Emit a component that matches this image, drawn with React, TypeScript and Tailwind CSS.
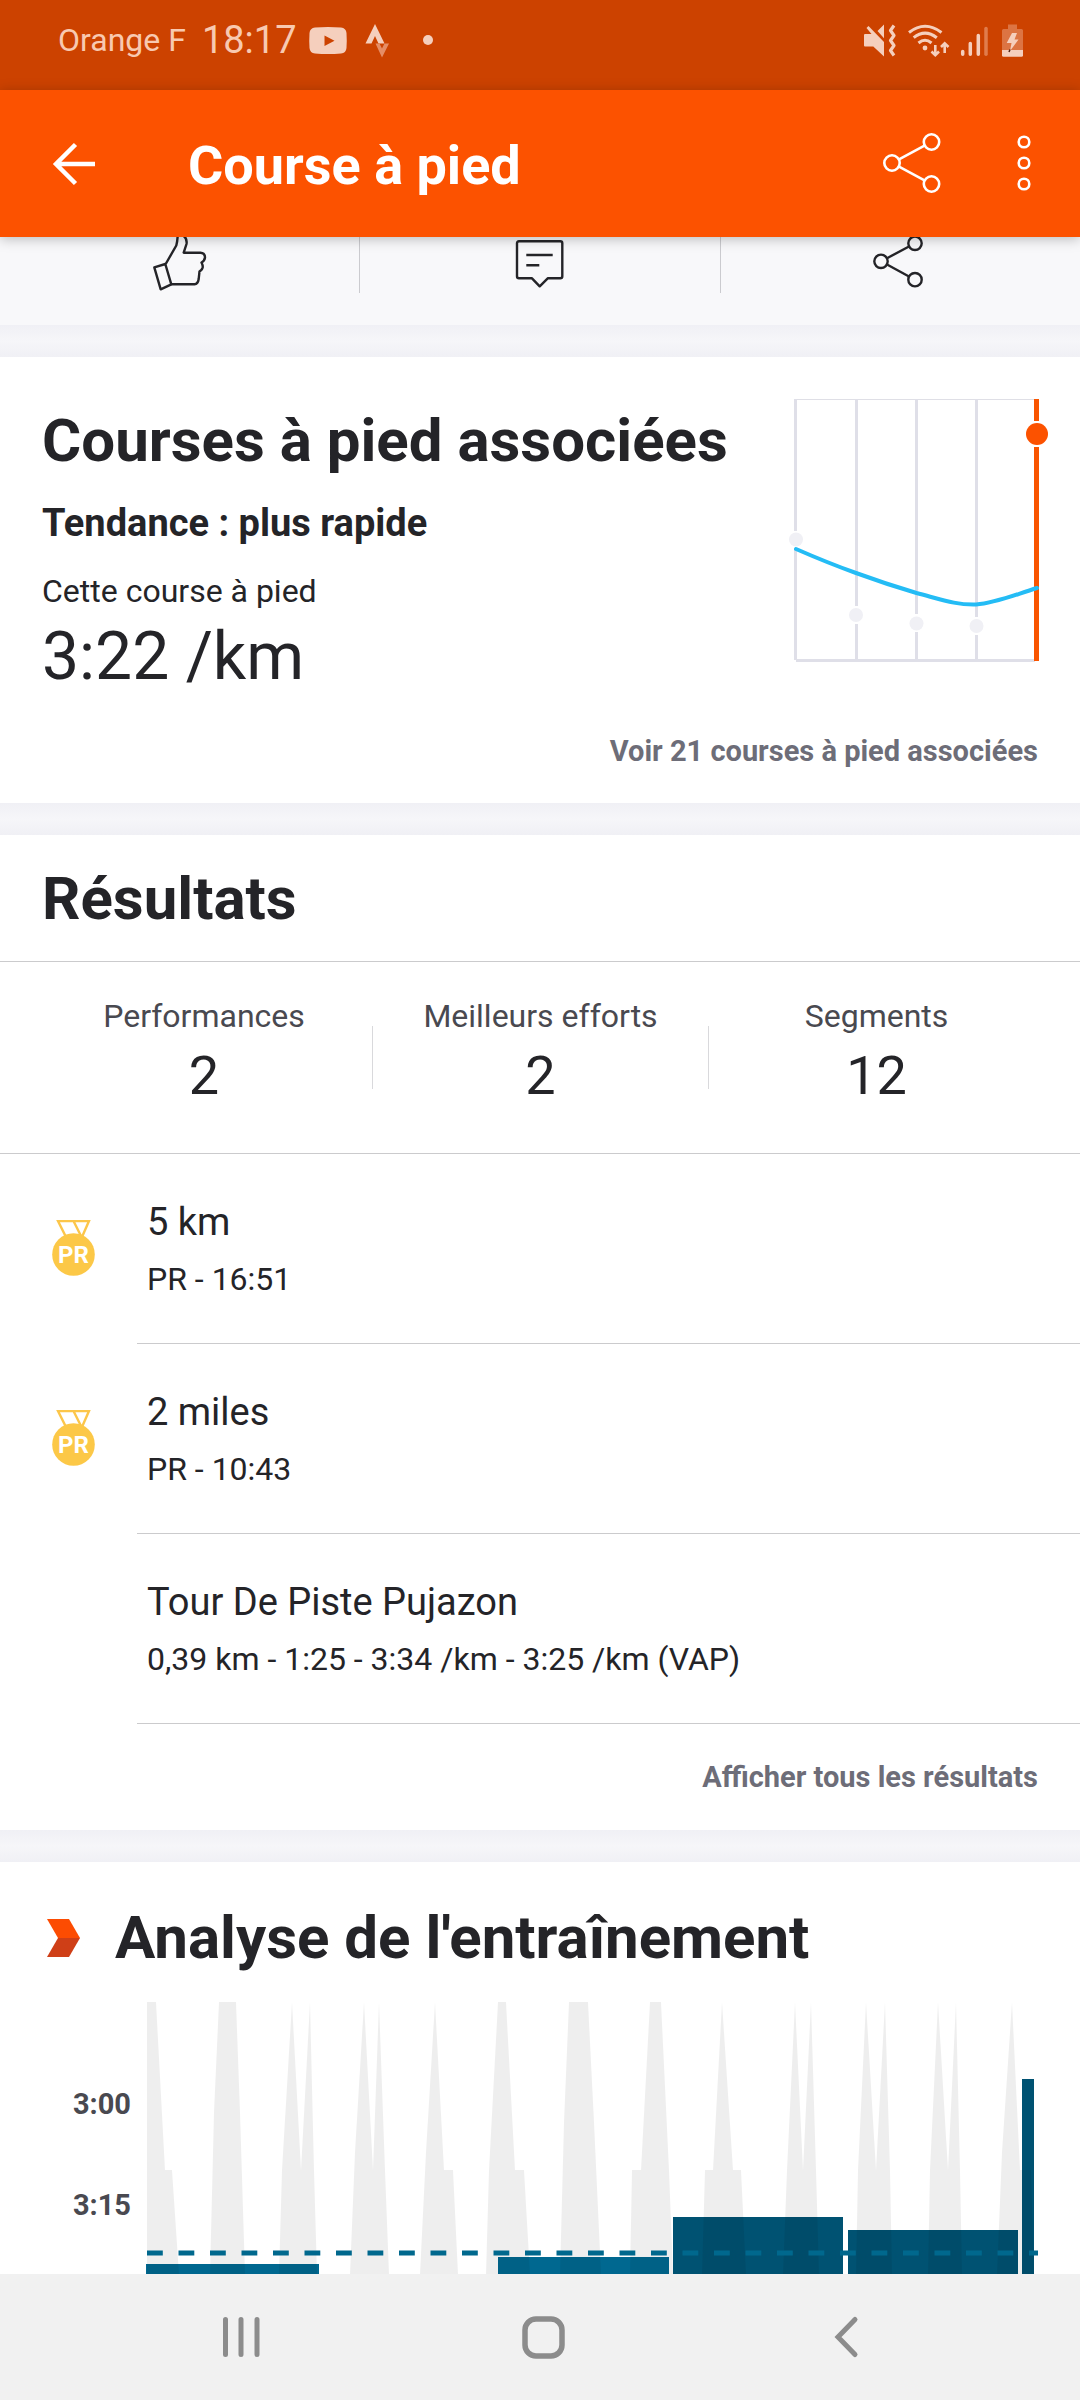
import type { ReactNode } from "react";

const efforts = [
  { title: "5 km", detail: "PR - 16:51", medal: true },
  { title: "2 miles", detail: "PR - 10:43", medal: true },
  {
    title: "Tour De Piste Pujazon",
    detail: "0,39 km - 1:25 - 3:34 /km - 3:25 /km (VAP)",
    medal: false,
  },
];

const stats = [
  { label: "Performances", value: "2" },
  { label: "Meilleurs efforts", value: "2" },
  { label: "Segments", value: "12" },
];

const laps = [
  { x: 0, width: 173, top: 262, color: "#006890" },
  { x: 352, width: 171, top: 255, color: "#006890" },
  { x: 527, width: 170, top: 215, color: "#005272" },
  { x: 702, width: 170, top: 228, color: "#005272" },
  { x: 876, width: 12, top: 77, color: "#005272" },
];

const elevation = [
  "1,0 10,0 19,168 26,168 33,272 1,272",
  "73,0 90,0 94,110 99,272 64,272 68,110",
  "133,272 136,168 146,0 155,168 164,0 168,168 171,272",
  "204,272 209,150 218,0 227,168 233,0 239,168 243,272",
  "274,272 280,150 289,0 298,168 307,168 312,272",
  "340,272 343,168 352,0 360,0 369,168 378,168 384,272",
  "414,272 418,120 423,0 442,0 448,120 455,272",
  "484,272 486,168 495,168 504,0 515,0 523,168 527,272",
  "556,272 559,168 567,168 576,0 587,168 595,168 600,272",
  "637,272 641,168 649,0 657,168 665,0 670,168 673,272",
  "710,272 712,168 720,0 730,168 739,0 744,168 746,272",
  "782,272 784,168 792,0 802,168 810,0 814,168 816,272",
  "851,272 856,150 866,0 874,168 885,168 888,272",
];

function StatusBar() {
  return (
    <div className="flex h-[90px] items-start justify-between bg-[#cc4200] pl-[58px] pr-14 pt-[22px] text-[#f8c9b0]">
      <div className="flex h-9 items-center">
        <span className="text-[32px] leading-10">Orange F</span>
        <span className="ml-4 text-[38px] leading-10">18:17</span>
        <svg className="ml-3 h-9 w-[38px]" viewBox="0 0 38 36" fill="#f5cfbd">
          <path
            fillRule="evenodd"
            d="M6 5.500Q19 4.500 32 5.500Q37 6 37.500 11Q38 18.500 37.500 26Q37 31 32 31.500Q19 32.500 6 31.500Q1 31 .5 26Q0 18.500 .5 11Q1 6 6 5.500ZM15.500 13.500V24L25.500 18.800Z"
          />
        </svg>
        <svg className="ml-4 h-9 w-7" viewBox="0 0 28 36">
          <path d="M12 2L2.500 21.500H8.500L12 14L15.500 21.500H21.500Z" fill="#f5cfbd" />
          <path d="M12.500 21.500H16.500L19 26.500L21.500 21.500H26L19 35.500Z" fill="#e58d66" />
        </svg>
        <span className="ml-8 size-2.5 rounded-full bg-[#f5cfbd]" />
      </div>
      <div className="flex gap-2">
        <svg className="h-9 w-9" viewBox="0 0 36 36">
          <path d="M2 13Q2 12 3 12H9.500L4.500 6L6.500 4L22 20V34.500L11.300 24.500H3Q2 24.500 2 23.500ZM22 2.500V16.300L15.500 9Z" fill="#f5cfbd" />
          <path d="M32 3.500L28.500 8.500L32 13.500L28.500 18.500L32 23.500L28.500 28.500L32 33.500" fill="none" stroke="#f5cfbd" strokeWidth="3.200" strokeLinejoin="round" />
        </svg>
        <svg className="h-9 w-11" viewBox="0 0 44 36" fill="none" stroke="#f5cfbd" strokeWidth="3">
          <path d="M3 10.500Q19 -2 35.500 10.500M7.700 15.700Q19 6.500 30.800 15.700M12.500 21Q19 15.500 25.500 21" />
          <circle cx="19" cy="26" r="2.400" fill="#f5cfbd" stroke="none" />
          <path d="M29.300 23V33M25.500 29.500L29.300 33.200L33 29.500M38.700 31V21.500M35 25L38.700 21.300L42.500 25" strokeWidth="2.600" />
        </svg>
        <svg className="h-9 w-8" viewBox="0 0 32 36" stroke="#f5cfbd" strokeWidth="3.500" strokeLinecap="round">
          <path d="M4.700 29.500V32.300M12.300 21.500V32.300M20.300 13.500V32.300" />
          <path d="M28 6.500V32.300" stroke="#e07c4c" />
        </svg>
        <svg className="h-9 w-[26px]" viewBox="-2 0 26 36">
          <path d="M8 2.500H17V7H21.500Q23 7 23 8.500V28H2V8.500Q2 7 3.500 7H8Z" fill="#dc7443" />
          <path d="M2 28H23V33.200Q23 34.700 21.500 34.700H3.500Q2 34.700 2 33.200Z" fill="#f5cfbd" />
          <path d="M12 11H17L14.500 17.500H18.500L10 29L11.500 21H6.700Z" fill="#f5cfbd" />
          <path d="M9 30L10 27.500" stroke="#4d2313" strokeWidth="1.500" />
        </svg>
      </div>
    </div>
  );
}

function Header() {
  return (
    <header className="relative z-10 flex h-[147px] items-center bg-[#fc5200] pl-[52px] pr-12 text-white shadow-[0_2px_12px_rgba(0,0,0,0.25)]">
      <button type="button" aria-label="Retour">
        <svg className="size-11" viewBox="0 0 44 44" fill="none" stroke="currentColor" strokeWidth="4.500">
          <path d="M43 22H4M23.500 2.500L4 22L23.500 41.500" />
        </svg>
      </button>
      <h1 className="ml-[92px] flex-1 pt-1 text-[54px] font-bold leading-[64px]">Course à pied</h1>
      <button type="button" aria-label="Partager">
        <svg className="size-[62px]" viewBox="0 0 62 62" fill="none" stroke="currentColor" strokeWidth="2.600">
          <circle cx="10" cy="30" r="7.700" />
          <circle cx="49.500" cy="9" r="7.700" />
          <circle cx="49.500" cy="51" r="7.700" />
          <path d="M17 26.300L42.500 12.700M17 33.700L42.500 47.300" />
        </svg>
      </button>
      <button type="button" aria-label="Plus d'options" className="ml-[72px]">
        <svg className="h-[62px] w-4" viewBox="0 0 16 62" fill="none" stroke="currentColor" strokeWidth="2.600">
          <circle cx="8" cy="9" r="5.300" />
          <circle cx="8" cy="30" r="5.300" />
          <circle cx="8" cy="51" r="5.300" />
        </svg>
      </button>
    </header>
  );
}

function ActionButton({ label, children }: { label: string; children: ReactNode }) {
  return (
    <button type="button" aria-label={label} className="flex flex-1 justify-center">
      <svg
        className="size-[60px]"
        viewBox="0 0 60 60"
        fill="none"
        stroke="#242428"
        strokeWidth="2.400"
        strokeLinejoin="round"
      >
        {children}
      </svg>
    </button>
  );
}

function ActionBar() {
  return (
    <div className="flex h-[88px] items-start bg-[#f8f8fa]">
      <ActionButton label="Kudos">
        <path d="M4.300 30.300L15.300 27L21.300 47.300L10.700 52.300Z" />
        <path d="M15.700 27L26.300 8.500Q27.500 4 27.700 -2H32Q37.500 .5 36.500 7L33.700 15.700H50.500Q55 16 55 20.500Q54.500 24 51.500 25.500Q53.500 29.500 52.300 31.500Q51.500 33.500 49.500 34.300L48.700 42Q48 47 44.500 47.300H21.300" />
      </ActionButton>
      <div className="h-14 w-px bg-[#cbcbcf]" />
      <ActionButton label="Commentaires">
        <path d="M9 4.300H50.300Q52.300 4.300 52.300 6.300V39.300Q52.300 41.300 50.300 41.300H37.700L29.700 49.300L22 41.300H9Q7 41.300 7 39.300V6.300Q7 4.300 9 4.300Z" />
        <path d="M16.300 18H42.700M16.300 28.300H29.300" />
      </ActionButton>
      <div className="h-14 w-px bg-[#cbcbcf]" />
      <ActionButton label="Partager l'activité">
        <circle cx="11" cy="24.300" r="6.700" />
        <circle cx="45" cy="6.300" r="6.700" />
        <circle cx="45" cy="42.700" r="6.700" />
        <path d="M17 21.200L39 9.500M17 27.500L39 39.500" />
      </ActionButton>
    </div>
  );
}

function Divider() {
  return <div className="h-8 bg-linear-to-b from-[#f0f0f5] via-[#f6f6f9] to-[#f0f0f5]" />;
}

function TrendChart() {
  return (
    <svg className="-mr-3 mt-10 h-[268px] w-[262px] shrink-0" viewBox="0 0 262 268" fill="none">
      <path d="M6 2.500H250" stroke="#dfdfe6" />
      <path d="M7.500 2V134M7.500 152V263M68.500 2V209M68.500 227V263M128.500 2V217M128.500 235V263M188.500 2V220M188.500 238V263" stroke="#dfdfe8" strokeWidth="3" />
      <path d="M8 263.500H247" stroke="#dfdfe8" strokeWidth="3" />
      <path d="M248.500 2V24M248.500 50V264" stroke="#f95500" strokeWidth="5" />
      <circle cx="249" cy="37" r="11" fill="#fc5200" />
      <g fill="#f0f0f5">
        <circle cx="8" cy="142.500" r="7" />
        <circle cx="68" cy="218" r="7" />
        <circle cx="128.500" cy="226.500" r="7" />
        <circle cx="188.500" cy="229" r="7" />
      </g>
      <path
        d="M8 152Q40 166 68 176Q98 187 128.500 196C155 203 168 208 188 207.500C208 206 226 198 249 191"
        stroke="#24bcf5"
        strokeWidth="4"
        strokeLinecap="round"
      />
    </svg>
  );
}

function RelatedRuns() {
  return (
    <section className="bg-white px-[42px] pb-8">
      <div className="flex items-start justify-between">
        <div className="pt-12">
          <h2 className="text-[60px] font-bold leading-[72px]">Courses à pied associées</h2>
          <p className="mt-5 text-[38px] font-bold leading-[52px]">Tendance : plus rapide</p>
          <p className="mt-[22px] text-[32px] leading-10">Cette course à pied</p>
          <p className="mt-2.5 text-[66px] leading-[72px]">3:22 /km</p>
        </div>
        <TrendChart />
      </div>
      <div className="mt-[38px] flex justify-end">
        <a href="#associees" className="text-[29px] font-bold leading-10 text-[#6d6d78]">
          Voir 21 courses à pied associées
        </a>
      </div>
    </section>
  );
}

function Medal() {
  return (
    <svg className="h-14 w-11" viewBox="0 0 44 56">
      <path d="M6 1H37L30 17H14ZM21.500 1L29 16" fill="none" stroke="#fcc64a" strokeWidth="2.400" />
      <circle cx="21.500" cy="34.500" r="21.300" fill="#fcc847" />
      <text
        x="21.500"
        y="42.500"
        textAnchor="middle"
        fill="#fff"
        className="text-[24px] font-bold"
      >
        PR
      </text>
    </svg>
  );
}

function Results() {
  return (
    <section className="bg-white">
      <h2 className="border-b border-[#cbcbcd] px-[42px] pb-[26px] pt-7 text-[60px] font-bold leading-[72px]">
        Résultats
      </h2>
      <div className="flex border-b border-[#cbcbcd] px-9">
        {stats.map((stat, index) => (
          <div key={stat.label} className="flex flex-1">
            {index > 0 ? <div className="mt-16 h-[63px] w-px bg-[#d9d9dc]" /> : null}
            <div className="flex-1 pb-[45px] pt-[34px] text-center">
              <p className="text-[32px] leading-10 text-[#494950]">{stat.label}</p>
              <p className="mt-2 text-[54px] leading-[64px]">{stat.value}</p>
            </div>
          </div>
        ))}
      </div>
      <ul>
        {efforts.map((effort) => (
          <li key={effort.title} className="flex">
            <div className="w-[137px] pl-[52px] pt-[66px]">{effort.medal ? <Medal /> : null}</div>
            <div className="flex-1 border-b border-[#cbcbcd] pb-11 pl-2.5 pt-11">
              <p className="text-[38px] leading-[48px]">{effort.title}</p>
              <p className="mt-[13px] text-[32px] leading-10">{effort.detail}</p>
            </div>
          </li>
        ))}
      </ul>
      <div className="flex justify-end px-[42px] py-[33px]">
        <a href="#resultats" className="text-[29px] font-bold leading-10 text-[#6d6d78]">
          Afficher tous les résultats
        </a>
      </div>
    </section>
  );
}

function PaceChart() {
  return (
    <svg className="h-[272px] flex-1" viewBox="0 0 892 272" preserveAspectRatio="none">
      {laps.map((lap) => (
        <rect
          key={lap.x}
          x={lap.x}
          y={lap.top}
          width={lap.width}
          height={272 - lap.top}
          fill={lap.color}
        />
      ))}
      {elevation.map((points) => (
        <polygon key={points} points={points} fillOpacity="0.067" />
      ))}
      <path d="M1 251H892" stroke="#00688d" strokeWidth="5" strokeDasharray="15.800 15.700" />
    </svg>
  );
}

function TrainingAnalysis() {
  return (
    <section className="bg-white pr-[42px] pt-10">
      <div className="flex items-center pl-[46px]">
        <svg className="h-10 w-9" viewBox="0 0 36 40">
          <path d="M1 1H23L34 20H12Z" fill="#fc4c02" />
          <path d="M12 20H34L23 39H1Z" fill="#cf3f17" />
        </svg>
        <h2 className="ml-[33px] text-[60px] font-bold leading-[72px]">Analyse de l'entraînement</h2>
      </div>
      <div className="mt-7 flex">
        <div className="w-[146px] pr-[15px] pt-[82px] text-right text-[29px] font-bold leading-10 text-[#494950]">
          <p>3:00</p>
          <p className="mt-[61px]">3:15</p>
        </div>
        <PaceChart />
      </div>
    </section>
  );
}

function SystemNav() {
  return (
    <nav className="flex h-[126px] items-center justify-between bg-[#f1f1f1] pl-[217px] pr-[209px] text-[#8c8c8c]">
      <button type="button" aria-label="Applications récentes">
        <svg className="size-12" viewBox="0 0 48 48" stroke="currentColor" strokeWidth="5" strokeLinecap="round">
          <path d="M8.500 6.500V41.500M24 6.500V41.500M40 6.500V41.500" />
        </svg>
      </button>
      <button type="button" aria-label="Accueil">
        <svg className="size-12" viewBox="0 0 48 48" fill="none" stroke="currentColor" strokeWidth="5.500">
          <rect x="5" y="6" width="37" height="37" rx="11" />
        </svg>
      </button>
      <button type="button" aria-label="Précédent">
        <svg className="size-12" viewBox="0 0 48 48" fill="none" stroke="currentColor" strokeWidth="5" strokeLinecap="round">
          <path d="M32 6.500L15 24L32 41.500" />
        </svg>
      </button>
    </nav>
  );
}

export default function App() {
  return (
    <div className="bg-white font-[Roboto,'Liberation_Sans',sans-serif] text-[#242428]">
      <StatusBar />
      <Header />
      <main>
        <ActionBar />
        <Divider />
        <RelatedRuns />
        <Divider />
        <Results />
        <Divider />
        <TrainingAnalysis />
      </main>
      <SystemNav />
    </div>
  );
}
